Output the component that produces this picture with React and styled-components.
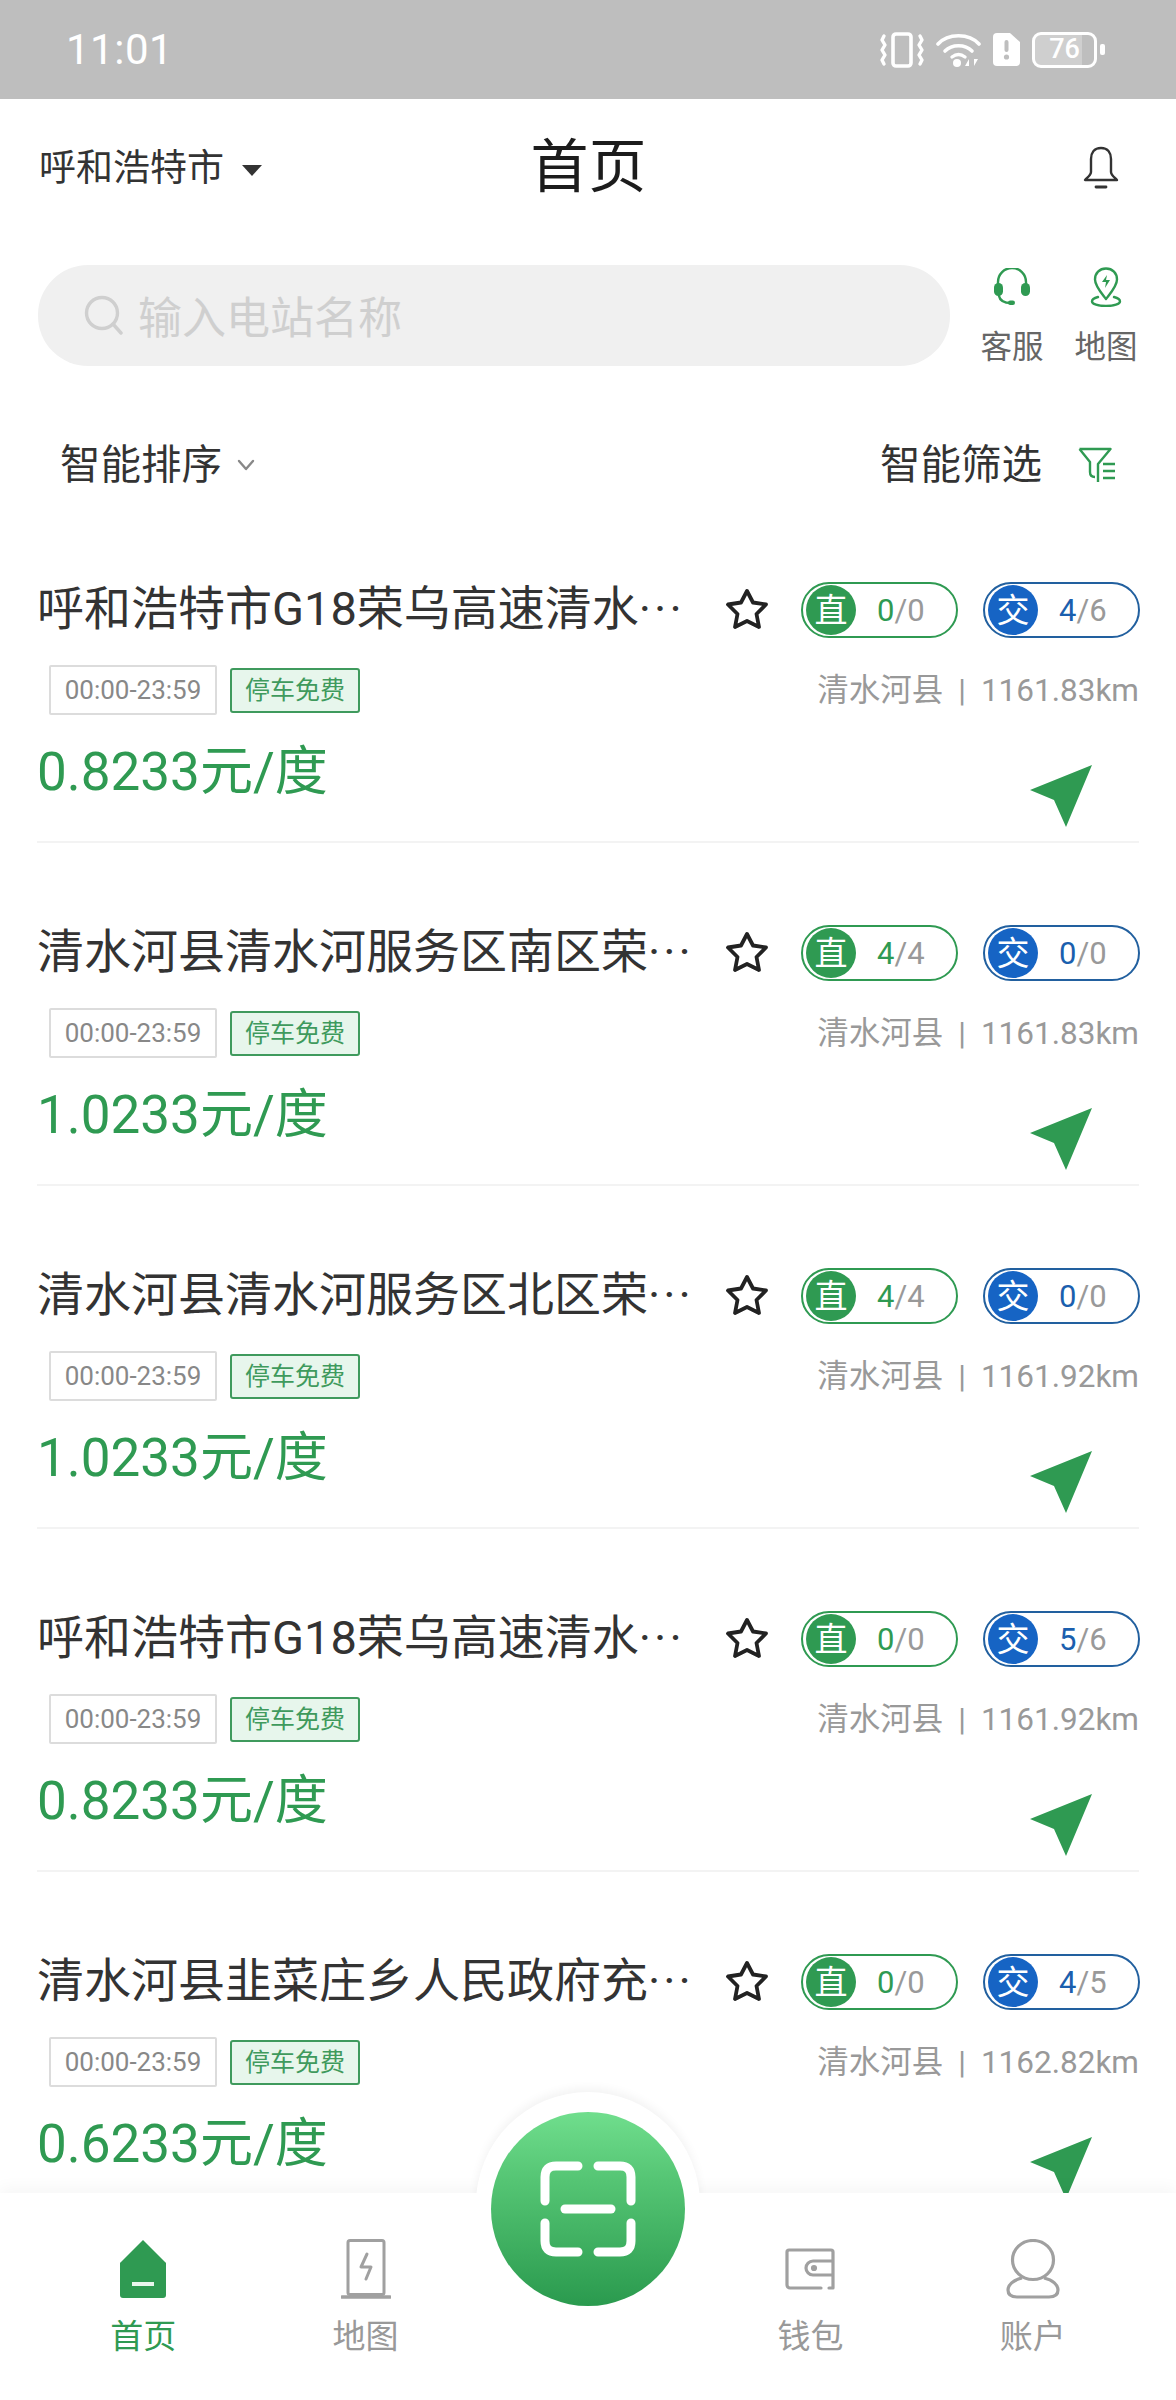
import React from "react";
import styled, { createGlobalStyle } from "styled-components";

const FONT = `Roboto, "Noto Sans CJK SC", "Noto Sans", sans-serif`;

const Global = createGlobalStyle`
  html, body { margin: 0; padding: 0; background: #fff; }
  * { box-sizing: border-box; }
  body { font-family: ${FONT}; }
`;

const Page = styled.div`
  width: 1176px; height: 2400px; display: flex; flex-direction: column;
  overflow: hidden; background: #fff;
`;
const StatusBar = styled.div`
  height: 99px; flex: none; background: #bebebe; color: #fff;
  display: flex; align-items: center; justify-content: space-between;
  padding: 0 71px 0 66px;
`;
const Clock = styled.div`font: 400 42px/1 ${FONT}; letter-spacing: .5px;`;
const StatusIcons = styled.div`display: flex; align-items: center; gap: 12px;`;
const BatteryGroup = styled.div`display: flex; align-items: center;`;

const Header = styled.div`
  height: 138px; flex: none; display: grid; grid-template-columns: 1fr auto 1fr;
  align-items: center; padding: 0 38px 0 39px;
`;
const City = styled.div`
  display: flex; align-items: center; gap: 18px; font-size: 37px; color: #333; line-height: 1;
`;
const Caret = styled.span`
  width: 0; height: 0; border-left: 10px solid transparent; border-right: 10px solid transparent;
  border-top: 11px solid #333; margin-top: 4px;
`;
const Title = styled.div`font-size: 58px; color: #1c1c1c; line-height: 1; margin-top: -2px;`;
const BellWrap = styled.div`display: flex; justify-content: flex-end; margin-right: 19px;`;

const SearchRow = styled.div`
  flex: none; display: flex; align-items: flex-start; padding: 28px 38px 0 38px; height: 128px;
`;
const SearchBox = styled.div`
  width: 912px; height: 101px; border-radius: 50px; background: #f0f0f0;
  display: flex; align-items: center; gap: 14px; padding: 0 0 2px 46px;
  color: #cfcfcf; font-size: 44px;
`;
const Shortcuts = styled.div`display: flex; gap: 32px; margin-left: 31px; margin-top: 2px;`;
const Shortcut = styled.div`
  width: 62px; display: flex; flex-direction: column; align-items: center; gap: 25px;
  font-size: 31.5px; color: #666; line-height: 1; white-space: nowrap; height: 96px;
`;
const ShortcutIcon = styled.div`height: 40px; display: flex; align-items: center; justify-content: center;`;

const SortRow = styled.div`
  flex: none; height: 100px; display: flex; align-items: center; justify-content: space-between;
  padding: 0 60px 0 60px; font-size: 40.5px; color: #333; margin-top: 50px;
`;
const SortSide = styled.div`display: flex; align-items: center; gap: ${p => p.$gap}px; line-height: 1;`;

const List = styled.div`flex: 1; min-height: 0; overflow: hidden; padding-top: 66px;`;
const Card = styled.div`
  height: 262px; margin: 0 37px 81px 37px; border-bottom: 2px solid #f3f3f3;
  display: flex; flex-direction: column;
`;
const CardTop = styled.div`display: flex; align-items: center; height: 56px; flex: none;`;
const StationName = styled.div`
  width: 656px; flex: none; font-size: 47px; color: #333; line-height: 56px; white-space: nowrap; overflow: hidden;
`;
const Dots = styled.span`letter-spacing: 3px; color: #333;`;
const StarWrap = styled.div`width: 44px; margin-left: 32px; margin-right: 32px; flex: none; display: flex;`;
const Pills = styled.div`display: flex; gap: 25px; margin-top: 2px;`;
const Pill = styled.div`
  width: 157px; height: 56px; border-radius: 28px; border: 2px solid ${p => p.$color};
  display: flex; align-items: center; padding-left: 3px;
`;
const PillBadge = styled.span`
  width: 50px; height: 50px; border-radius: 50%; background: ${p => p.$bg}; color: #fff;
  font-size: 33px; display: flex; align-items: center; justify-content: center; line-height: 1;
`;
const PillCount = styled.span`margin-left: 21px; font-size: 31px; color: #999; line-height: 1;`;
const Avail = styled.span`color: ${p => p.$color};`;

const MetaRow = styled.div`display: flex; justify-content: space-between; margin-top: 25px; padding-left: 12px;`;
const Tags = styled.div`display: flex; align-items: center; gap: 13px; height: 50px; margin-top: 3px;`;
const TimeTag = styled.span`
  width: 168px; height: 50px; border: 2px solid #dcdcdc; border-radius: 2px; color: #888;
  font-size: 26px; display: flex; align-items: center; justify-content: center; line-height: 1;
`;
const ParkTag = styled.span`
  width: 130px; height: 45px; border: 2px solid #3f9a5d; border-radius: 3px; background: #e7f6ec; color: #3f9a5d;
  font-size: 25px; display: flex; align-items: center; justify-content: center; line-height: 1;
`;
const Where = styled.div`
  font-size: 31.5px; color: #999; line-height: 40px; display: flex; gap: 15px; margin-top: 9px;
`;
const PriceRow = styled.div`display: flex; justify-content: space-between; align-items: flex-start;`;
const Price = styled.div`font-size: 53px; line-height: 60px; color: #2f9a52; margin-top: 27px;`;
const ArrowWrap = styled.div`margin-top: 50px; margin-right: 47px; display: flex;`;

const TabBar = styled.div`
  flex: none; height: 207px; background: #fff; position: relative; z-index: 2;
  display: grid; grid-template-columns: repeat(5, 1fr); padding: 0 32px;
  box-shadow: 0 -6px 14px rgba(0,0,0,.035);
`;
const RingClip = styled.div`
  position: absolute; left: 438px; top: -113px; width: 300px; height: 113px; overflow: hidden;
`;
const Ring = styled.div`
  position: absolute; left: 38px; top: 12px; width: 224px; height: 224px; border-radius: 50%;
  background: #fff; box-shadow: 0 -4px 10px rgba(0,0,0,.05);
`;
const ScanButton = styled.div`
  position: absolute; left: 491px; top: -81px; width: 194px; height: 194px; border-radius: 50%;
  background: linear-gradient(180deg, #70de8d 0%, #55c574 35%, #2a9a4e 100%);
  display: flex; align-items: center; justify-content: center;
`;
const Tab = styled.div`
  display: flex; flex-direction: column; align-items: center; color: ${p => p.$active ? "#2f9a52" : "#999"};
  font-size: 33px; line-height: 1; padding-top: 46px;
`;
const TabIcon = styled.div`height: 60px; display: flex; align-items: center; justify-content: center; margin-bottom: 21px;`;

const GREEN = "#2f9a52";
const BLUE_BORDER = "#22609f";
const BLUE = "#1664c4";
const BLUE_TEXT = "#1b5fae";

const VibrateIcon = () => (
  <svg width="44" height="36" viewBox="0 0 44 36" fill="none" stroke="#fff" strokeLinejoin="round" strokeLinecap="round">
    <rect x="13" y="2" width="18" height="32" rx="3" strokeWidth="3.6" />
    <path d="M4 4 2 8l3 5-3 5 3 5-3 5 2 4M40 4l2 4-3 5 3 5-3 5 3 5-2 4" strokeWidth="3.4" />
  </svg>
);
const WifiIcon = () => (
  <svg width="45" height="34" viewBox="0 0 45 34" fill="none" stroke="#fff" strokeLinecap="round">
    <path d="M2 11C12 0 33 0 43 11" strokeWidth="3.6" />
    <path d="M9 18c7-7 20-7 27 0" strokeWidth="3.6" />
    <path d="M16 24c4-3 9-3 13 0" strokeWidth="3.4" />
    <circle cx="21" cy="30" r="4" fill="#fff" stroke="none" />
    <path d="M33 33V26l-4 7h4M38 26v7l4-7h-4" fill="#fff" stroke="none" />
  </svg>
);
const SimIcon = () => (
  <svg width="27" height="33" viewBox="0 0 27 33">
    <path d="M4 0h13l10 9v20a4 4 0 0 1-4 4H4a4 4 0 0 1-4-4V4a4 4 0 0 1 4-4z" fill="#fff" />
    <rect x="11.500" y="7" width="4" height="12" rx="2" fill="#bebebe" />
    <circle cx="13.500" cy="24" r="2.600" fill="#bebebe" />
  </svg>
);
const BatteryBody = styled.div`
  width: 65px; height: 36px; border: 3px solid #fff; border-radius: 9px; display: flex; align-items: center;
  justify-content: center; font: 500 27px/1 ${FONT}; color: #fff; background: linear-gradient(90deg, #cfcfcf 0 80%, transparent 80%);
`;
const BatteryTip = styled.div`width: 5px; height: 11px; border-radius: 2px; background: #fff; margin-left: 3px;`;

const Bell = () => (
  <svg width="36" height="44" viewBox="0 0 36 44" fill="none" stroke="#333" strokeWidth="2.400" strokeLinejoin="round" strokeLinecap="round">
    <path d="M18 2C11 2 8 7 8 13v13c0 3-3 5-6 8h32c-3-3-6-5-6-8V13c0-6-3-11-10-11z" />
    <path d="M13 41h10" strokeWidth="2.800" />
  </svg>
);
const SearchIcon = () => (
  <svg width="40" height="40" viewBox="0 0 40 40" fill="none" stroke="#cfcfcf" strokeWidth="3.400" strokeLinecap="round">
    <circle cx="18" cy="18" r="15.500" />
    <path d="M29 29l8 9" />
  </svg>
);
const HeadsetIcon = () => (
  <svg width="36" height="38" viewBox="0 0 36 38" fill="none" stroke={GREEN} strokeWidth="2.400" strokeLinecap="round">
    <path d="M4 17v-3a14 14 0 0 1 28 0v3" />
    <rect x="0" y="15" width="9" height="13" rx="4.500" fill={GREEN} stroke="none" />
    <rect x="27" y="15" width="9" height="13" rx="4.500" fill={GREEN} stroke="none" />
    <path d="M5 28c1 5 6 7 12 7" />
    <rect x="14" y="32.500" width="7" height="4.500" rx="2.200" fill={GREEN} stroke="none" />
  </svg>
);
const PinIcon = () => (
  <svg width="32" height="40" viewBox="0 0 32 40" fill="none" stroke={GREEN} strokeWidth="2.400" strokeLinejoin="round" strokeLinecap="round">
    <path d="M16 1.500c-6.500 0-11 4.500-11 11 0 6.500 6 13 11 19.500 5-6.500 11-13 11-19.500 0-6.500-4.500-11-11-11z" />
    <path d="M17 8l-5 7h4l-1 6 5-8h-4z" fill={GREEN} stroke="none" />
    <path d="M8 30c-4 1-6 3-6 4.500C2 37 8 39 16 39s14-2 14-4.500C30 33 28 31 24 30" />
  </svg>
);
const SortChevron = () => (
  <svg width="20" height="14" viewBox="0 0 20 14" fill="none" stroke="#888" strokeWidth="2.400" strokeLinecap="round" strokeLinejoin="round">
    <path d="M3 3l7 8 7-8" />
  </svg>
);
const FilterIcon = () => (
  <svg width="38" height="36" viewBox="0 0 38 36" fill="none" stroke={GREEN} strokeWidth="2.400" strokeLinejoin="round">
    <path d="M1.500 2h31L20 17v18M1.500 2 12 15v10c0 3 2 5 5 5" />
    <path d="M25 17h12M25 24h12M25 31h12" />
  </svg>
);
const Star = () => (
  <svg width="44" height="42" viewBox="0 0 44 42" fill="none" stroke="#222" strokeWidth="3.800" strokeLinejoin="round">
    <path d="M22 3l6 11.500 13 2-9.500 9.500 2.500 13L22 33l-12 6 2.500-13L3 16.500l13-2z" />
  </svg>
);
const NavArrow = () => (
  <svg width="62" height="62" viewBox="0 0 62 62">
    <path d="M62 0 0 25l24 10 12 27z" fill={GREEN} />
  </svg>
);
const ScanIcon = () => (
  <svg width="96" height="96" viewBox="0 0 96 96" fill="none" stroke="#fff" strokeWidth="9" strokeLinecap="round" strokeLinejoin="round">
    <path d="M38 5H16Q5 5 5 16v24M58 5h22q11 0 11 11v24M5 62v18q0 11 11 11h22M91 62v18q0 11-11 11H58" />
    <path d="M25 48h46" />
  </svg>
);
const HomeIcon = () => (
  <svg width="46" height="58" viewBox="0 0 46 58">
    <path d="M23 0 45 22a2 2 0 0 1 1 2v31a3 3 0 0 1-3 3H3a3 3 0 0 1-3-3V24a2 2 0 0 1 1-2z" fill={GREEN} />
    <rect x="12" y="42" width="22" height="4" fill="#e9f6ed" />
  </svg>
);
const ChargerIcon = () => (
  <svg width="50" height="60" viewBox="0 0 50 60" fill="none" stroke="#a0a0a0" strokeLinecap="round" strokeLinejoin="round">
    <rect x="7" y="1.500" width="36" height="54" rx="2" strokeWidth="3" />
    <path d="M26 15l-6 13h10l-5 12" strokeWidth="3" />
    <path d="M1 58h48" strokeWidth="3.400" />
  </svg>
);
const WalletIcon = () => (
  <svg width="50" height="42" viewBox="0 0 50 42" fill="none" stroke="#a0a0a0" strokeWidth="3.200" strokeLinecap="round" strokeLinejoin="round">
    <path d="M36 40H5a3 3 0 0 1-3-3V4a2 2 0 0 1 2-2h42a2 2 0 0 1 2 2v36h-4" />
    <path d="M47 13H28a7 7 0 0 0 0 14h19" />
    <circle cx="29" cy="20" r="1.500" fill="#a0a0a0" />
  </svg>
);
const UserIcon = () => (
  <svg width="54" height="60" viewBox="0 0 54 60" fill="none" stroke="#a0a0a0" strokeWidth="3.200">
    <ellipse cx="27" cy="21" rx="20.500" ry="19.500" />
    <path d="M16 39C7 41 2 46 2 51c0 5 4 7 9 7h32c5 0 9-2 9-7 0-5-5-10-14-12" />
  </svg>
);

const STATIONS = [
  { name: "呼和浩特市G18荣乌高速清水", dc: ["0", "0"], ac: ["4", "6"], km: "1161.83km", price: "0.8233" },
  { name: "清水河县清水河服务区南区荣", dc: ["4", "4"], ac: ["0", "0"], km: "1161.83km", price: "1.0233" },
  { name: "清水河县清水河服务区北区荣", dc: ["4", "4"], ac: ["0", "0"], km: "1161.92km", price: "1.0233" },
  { name: "呼和浩特市G18荣乌高速清水", dc: ["0", "0"], ac: ["5", "6"], km: "1161.92km", price: "0.8233" },
  { name: "清水河县韭菜庄乡人民政府充", dc: ["0", "0"], ac: ["4", "5"], km: "1162.82km", price: "0.6233" },
];

const PortPill = ({ label, color, bg, text, count }) => (
  <Pill $color={color}>
    <PillBadge $bg={bg}>{label}</PillBadge>
    <PillCount><Avail $color={text}>{count[0]}</Avail>/{count[1]}</PillCount>
  </Pill>
);

const StationCard = ({ s }) => (
  <Card>
    <CardTop>
      <StationName>{s.name}<Dots>···</Dots></StationName>
      <StarWrap><Star /></StarWrap>
      <Pills>
        <PortPill label="直" color={GREEN} bg={GREEN} text={GREEN} count={s.dc} />
        <PortPill label="交" color={BLUE_BORDER} bg={BLUE} text={BLUE_TEXT} count={s.ac} />
      </Pills>
    </CardTop>
    <MetaRow>
      <Tags>
        <TimeTag>00:00-23:59</TimeTag>
        <ParkTag>停车免费</ParkTag>
      </Tags>
      <Where><span>清水河县</span><span>|</span><span>{s.km}</span></Where>
    </MetaRow>
    <PriceRow>
      <Price>{s.price}元/度</Price>
      <ArrowWrap><NavArrow /></ArrowWrap>
    </PriceRow>
  </Card>
);

export default function App() {
  return (
    <Page>
      <Global />
      <StatusBar>
        <Clock>11:01</Clock>
        <StatusIcons>
          <VibrateIcon />
          <WifiIcon />
          <SimIcon />
          <BatteryGroup>
            <BatteryBody>76</BatteryBody>
            <BatteryTip />
          </BatteryGroup>
        </StatusIcons>
      </StatusBar>
      <Header>
        <City>呼和浩特市<Caret /></City>
        <Title>首页</Title>
        <BellWrap><Bell /></BellWrap>
      </Header>
      <SearchRow>
        <SearchBox><SearchIcon />输入电站名称</SearchBox>
        <Shortcuts>
          <Shortcut><ShortcutIcon><HeadsetIcon /></ShortcutIcon>客服</Shortcut>
          <Shortcut><ShortcutIcon><PinIcon /></ShortcutIcon>地图</Shortcut>
        </Shortcuts>
      </SearchRow>
      <SortRow>
        <SortSide $gap={14}>智能排序<SortChevron /></SortSide>
        <SortSide $gap={36}>智能筛选<FilterIcon /></SortSide>
      </SortRow>
      <List>
        {STATIONS.map((s, i) => <StationCard key={i} s={s} />)}
      </List>
      <TabBar>
        <RingClip><Ring /></RingClip>
        <ScanButton><ScanIcon /></ScanButton>
        <Tab $active><TabIcon><HomeIcon /></TabIcon>首页</Tab>
        <Tab><TabIcon><ChargerIcon /></TabIcon>地图</Tab>
        <div />
        <Tab><TabIcon><WalletIcon /></TabIcon>钱包</Tab>
        <Tab><TabIcon><UserIcon /></TabIcon>账户</Tab>
      </TabBar>
    </Page>
  );
}
